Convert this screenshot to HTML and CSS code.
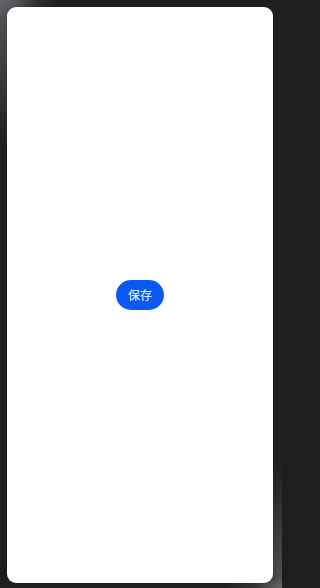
FILE: index.html
```html
<!DOCTYPE html>
<html lang="zh">
<head>
<meta charset="utf-8">
<link rel="stylesheet" href="styles.css">
</head>
<body>
<div class="device">
  <div class="screen">
    <button class="save-btn">保存</button>
  </div>
</div>
</body>
</html>
```
FILE: styles.css
```css
html, body {
  margin: 0;
  padding: 0;
}
body {
  width: 282px;
  height: 588px;
  overflow: hidden;
  background: #1e1e1f;
}
.device {
  width: 282px;
  height: 588px;
  box-sizing: border-box;
  padding: 7px 9px 5px 7px;
  background:
    radial-gradient(ellipse 36px 150px at 0 0, rgba(120,120,125,0.65), rgba(120,120,125,0) 100%),
    radial-gradient(ellipse 60px 18px at 0 0, rgba(120,120,125,0.5), rgba(120,120,125,0) 100%),
    radial-gradient(ellipse 26px 130px at 100% 100%, rgba(120,120,125,0.6), rgba(120,120,125,0) 100%),
    radial-gradient(ellipse 60px 12px at 100% 100%, rgba(120,120,125,0.5), rgba(120,120,125,0) 100%),
    #1e1e1f;
}
.screen {
  width: 266px;
  height: 576px;
  background: #ffffff;
  border-radius: 9px;
  display: flex;
  align-items: center;
  justify-content: center;
}
.save-btn {
  width: 48px;
  height: 30px;
  border: none;
  border-radius: 15px;
  background: #0a59f7;
  color: #ffffff;
  font-family: "Noto Sans CJK SC", "Noto Sans", sans-serif;
  font-size: 12px;
  line-height: 30px;
  padding: 0;
  margin: 0;
}
```
